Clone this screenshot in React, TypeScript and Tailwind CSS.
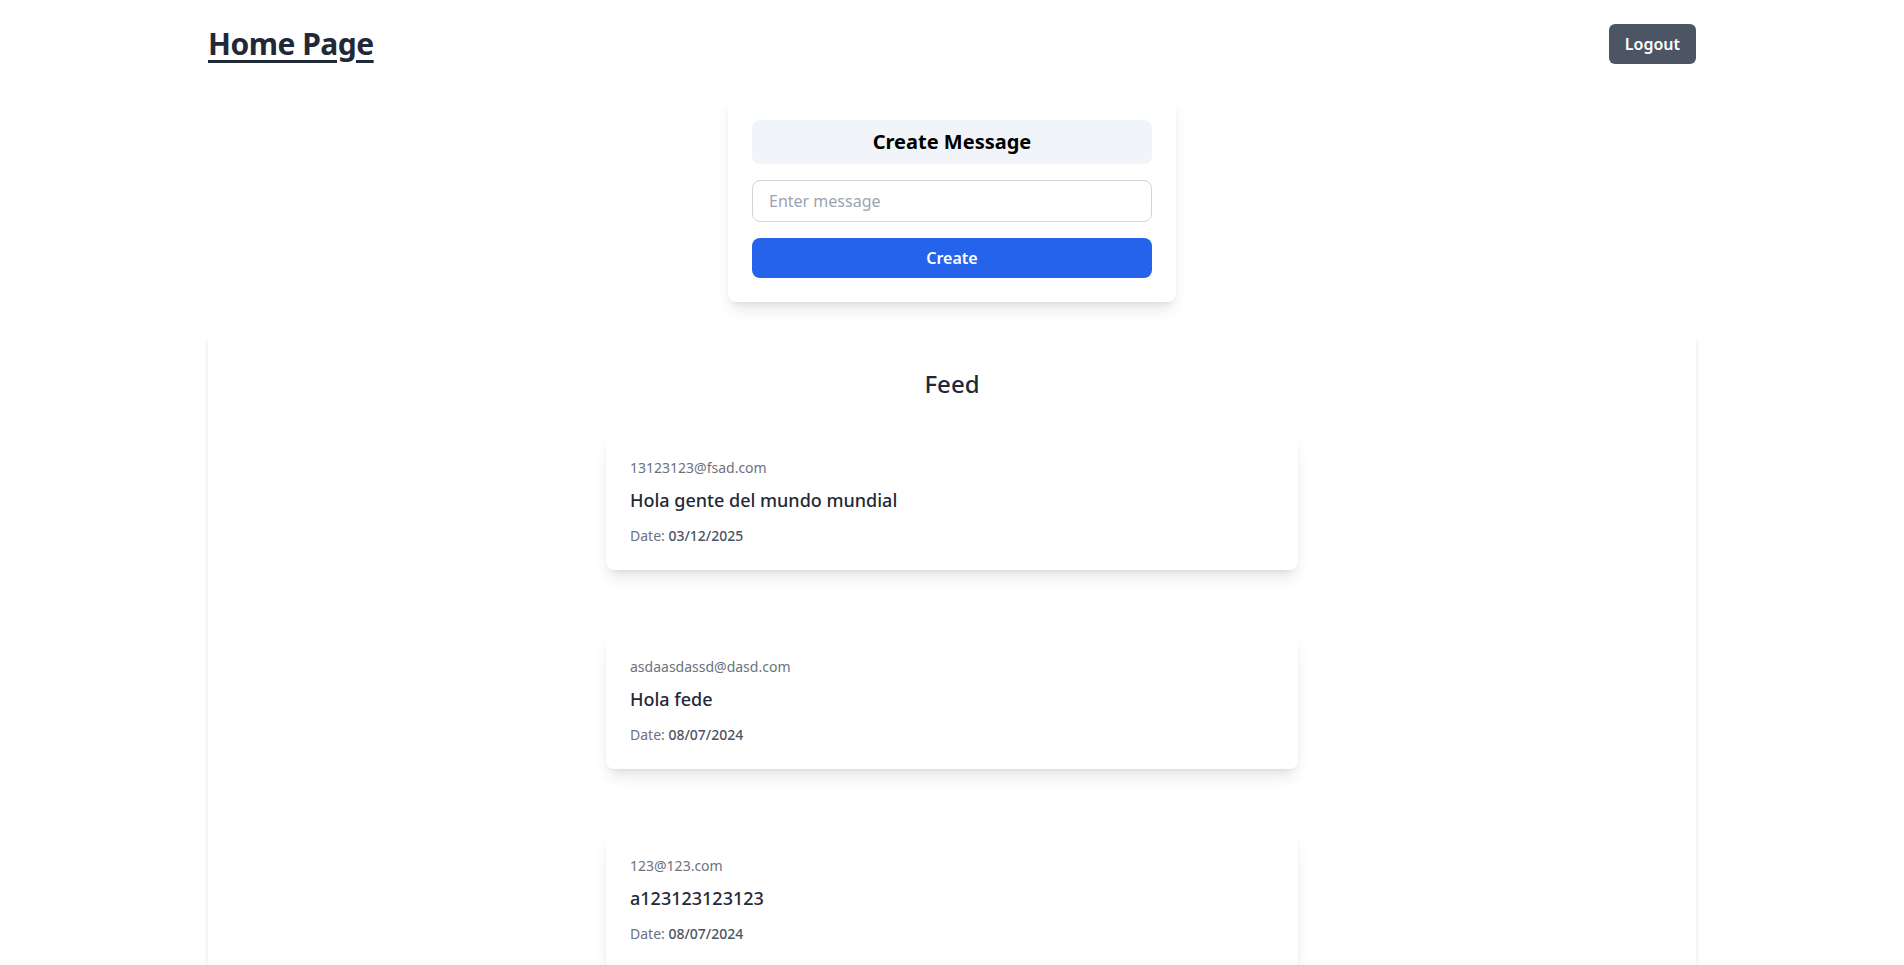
import React from "react";

const messages = [
  { email: "13123123@fsad.com", text: "Hola gente del mundo mundial", date: "03/12/2025" },
  { email: "asdaasdassd@dasd.com", text: "Hola fede", date: "08/07/2024" },
  { email: "123@123.com", text: "a123123123123", date: "08/07/2024" },
];

export default function App() {
  return (
    <div className="min-h-screen bg-white font-['Noto_Sans',sans-serif]">
      <div className="mx-auto max-w-[1536px] px-6">
        <header className="flex items-center justify-between pt-6">
          <h1 className="text-3xl font-bold tracking-[-0.5px] text-[#1f2937] underline underline-offset-[5px] decoration-[3px]">Home Page</h1>
          <button className="rounded-md bg-[#4b5563] px-4 py-2 font-semibold text-white">Logout</button>
        </header>

        <div className="mx-auto mt-8 w-[448px] rounded-lg bg-white p-6 shadow-lg">
          <h2 className="rounded-lg bg-[#f1f5f9] py-2 text-center text-xl font-bold text-black">Create Message</h2>
          <input
            type="text"
            placeholder="Enter message"
            className="mt-4 block w-full rounded-lg border border-[#d1d5db] px-4 py-2 text-base text-[#1f2937] placeholder:text-[#9ca3af] outline-none"
          />
          <button className="mt-4 block h-10 w-full rounded-lg bg-[#2563eb] font-semibold text-white">Create</button>
        </div>

        <section className="mt-[30px] rounded-lg bg-white pt-9 pb-10 shadow-md">
          <h2 className="text-center text-2xl font-medium text-[#1f2937]">Feed</h2>
          <div className="mt-8 flex flex-col items-center gap-[61px]">
            {messages.map((m, i) => (
              <div key={i} className="w-[692px] rounded-lg bg-white px-6 pt-[26px] pb-6 shadow-lg">
                <p className="mb-2 text-sm text-[#6b7280]">{m.email}</p>
                <p className="mb-3 text-lg font-medium leading-7 text-[#1f2937]">{m.text}</p>
                <p className="text-sm text-[#6b7280]">
                  Date: <span className="font-medium text-[#4b5563]">{m.date}</span>
                </p>
              </div>
            ))}
          </div>
        </section>
      </div>
    </div>
  );
}
